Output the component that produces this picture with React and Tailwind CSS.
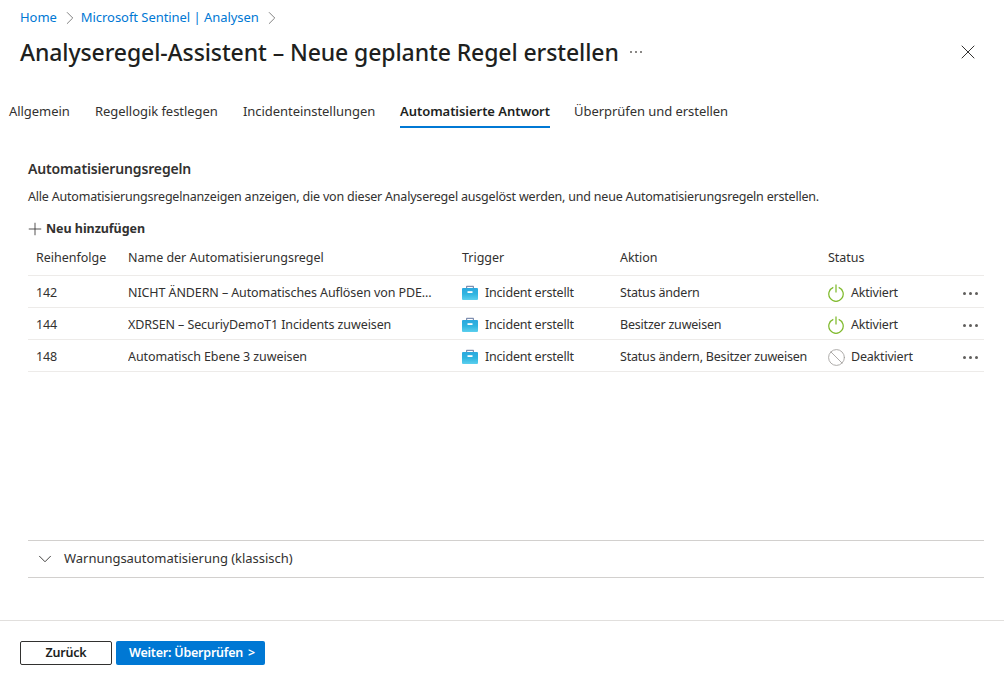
import React from 'react';
import { ChevronRight, ChevronDown, Plus, X, Ban } from 'lucide-react';

const rules = [
  { order: '142', name: 'NICHT ÄNDERN – Automatisches Auflösen von PDE...', action: 'Status ändern', active: true },
  { order: '144', name: 'XDRSEN – SecuriyDemoT1 Incidents zuweisen', action: 'Besitzer zuweisen', active: true },
  { order: '148', name: 'Automatisch Ebene 3 zuweisen', action: 'Status ändern, Besitzer zuweisen', active: false },
];

const tabs = [
  { label: 'Allgemein', cls: 'w-[86px] pl-[9px]' },
  { label: 'Regellogik festlegen', cls: 'w-[148px] pl-[9px]' },
  { label: 'Incidenteinstellungen', cls: 'w-[166px] pl-[9px]' },
];

const Briefcase = ({ id }) => (
  <svg width="16" height="16" viewBox="0 0 16 16" className="shrink-0">
    <defs>
      <linearGradient id={id} x1="0" y1="0" x2="0" y2="1">
        <stop offset="0" stopColor="#2aa8de" />
        <stop offset="0.5" stopColor="#2fb4e0" />
        <stop offset="1" stopColor="#5ccfee" />
      </linearGradient>
    </defs>
    <path d="M4 3.5V1.8C4 1.2 4.5.8 5 .8h6c.5 0 1 .4 1 1v1.7h-1.2V2H5.2v1.5z" fill="#7f8fb0" />
    <rect x="0" y="3" width="16" height="12" rx="1" fill={`url(#${id})`} />
    <rect x="5.5" y="6.2" width="5" height="1.8" fill="#ffffff" />
  </svg>
);

const PowerOn = () => (
  <svg width="16" height="18" viewBox="0 0 16 18" fill="none" stroke="#7fba2c" strokeWidth="1.25" className="shrink-0">
    <path d="M10.7 3.4A7.2 7.2 0 1 1 5.3 3.4" />
    <path d="M8 .6v8" />
  </svg>
);

const App = () => {
  return (
    <div className="w-[1004px] h-[686px] bg-white flex flex-col overflow-hidden font-['Noto_Sans',sans-serif] text-[#323130] text-[12.5px] tracking-[-0.2px]">
      <div className="flex items-center h-[18px] mt-[9px] pl-5 text-[#0078d4] text-[13px] tracking-[-0.05px]">
        <span>Home</span>
        <ChevronRight size={22} strokeWidth={1} className="text-[#777] ml-[2px]" />
        <span>Microsoft Sentinel | Analysen</span>
        <ChevronRight size={22} strokeWidth={1} className="text-[#777] ml-[2px]" />
      </div>

      <div className="flex items-center h-[30px] mt-[10px] pl-5 pr-[24px]">
        <h1 className="text-[23px] font-medium text-[#201f1e] tracking-[-0.1px]">Analyseregel-Assistent – Neue geplante Regel erstellen</h1>
        <span className="ml-[11px] flex gap-[3px]">
          <i className="w-[2px] h-[2px] bg-[#8a8886]" />
          <i className="w-[2px] h-[2px] bg-[#8a8886]" />
          <i className="w-[2px] h-[2px] bg-[#8a8886]" />
        </span>
        <X size={24} strokeWidth={1} className="ml-auto text-[#323130]" />
      </div>

      <div className="flex items-start h-[48px] mt-[26px] text-[13px] text-[#323130] tracking-[-0.05px]">
        {tabs.map((tab) => (
          <div key={tab.label} className={`${tab.cls} h-[35px] pt-[9px]`}>{tab.label}</div>
        ))}
        <div className="w-[150px] h-[35px] pt-[9px] font-semibold text-[#201f1e] border-b-2 border-[#0078d4] text-center whitespace-nowrap">Automatisierte Antwort</div>
        <div className="ml-[24px] pt-[9px]">Überprüfen und erstellen</div>
      </div>

      <div className="flex-1 flex flex-col pl-[28px] pr-[20px] mt-[18px]">
        <h2 className="text-[14px] leading-[20px] font-semibold text-[#323130] tracking-[-0.15px]">Automatisierungsregeln</h2>
        <p className="mt-[9px] leading-[18px]">Alle Automatisierungsregelnanzeigen anzeigen, die von dieser Analyseregel ausgelöst werden, und neue Automatisierungsregeln erstellen.</p>
        <div className="flex items-center mt-[14px] h-[18px] font-bold text-[#323130] tracking-[-0.05px]">
          <Plus size={20} strokeWidth={1} className="-ml-[3px] mr-[1px]" />
          <span>Neu hinzufügen</span>
        </div>

        <div className="grid grid-cols-[92px_334px_158px_208px_1fr] items-center h-[34px] pl-[8px] mt-[4px] border-b border-[#edebe9] tracking-[-0.02px]">
          <span>Reihenfolge</span>
          <span>Name der Automatisierungsregel</span>
          <span>Trigger</span>
          <span>Aktion</span>
          <span>Status</span>
        </div>
        {rules.map((rule) => (
          <div key={rule.order} className="grid grid-cols-[92px_334px_158px_208px_1fr] items-center h-[32px] pt-[3px] pl-[8px] border-b border-[#edebe9]">
            <span>{rule.order}</span>
            <span className="truncate tracking-[-0.1px]">{rule.name}</span>
            <span className="flex items-center gap-[7px]"><Briefcase id={`case-${rule.order}`} />Incident erstellt</span>
            <span className="whitespace-nowrap">{rule.action}</span>
            <span className="flex items-center">
              <span className="w-[16px] h-[16px] flex items-center justify-center">
                {rule.active
                  ? <PowerOn />
                  : <Ban size={19} strokeWidth={1.1} className="shrink-0 text-[#a19f9d]" />}
              </span>
              <span className="ml-[7px]">{rule.active ? 'Aktiviert' : 'Deaktiviert'}</span>
              <span className="ml-auto mr-[6px] flex gap-[3px]">
                <i className="w-[3px] h-[3px] rounded-full bg-[#605e5c]" />
                <i className="w-[3px] h-[3px] rounded-full bg-[#605e5c]" />
                <i className="w-[3px] h-[3px] rounded-full bg-[#605e5c]" />
              </span>
            </span>
          </div>
        ))}

        <div className="flex items-center h-[38px] mt-[168px] pl-[6px] border-y border-[#d2d0ce] text-[13px] tracking-[-0.03px]">
          <ChevronDown size={22} strokeWidth={1} className="mr-[8px]" />
          <span>Warnungsautomatisierung (klassisch)</span>
        </div>
      </div>

      <div className="flex items-center gap-[4px] h-[66px] pb-[2px] pl-5 border-t border-[#e1dfdd]">
        <button className="w-[92px] h-[24px] pt-[1px] rounded-[2px] border border-[#323130] font-semibold text-[#201f1e]">Zurück</button>
        <button className="flex items-center justify-between w-[149px] h-[24px] pt-[1px] pl-[13px] pr-[10px] rounded-[2px] bg-[#0078d4] text-white font-semibold tracking-[-0.22px]">
          <span>Weiter: Überprüfen</span>
          <span>&gt;</span>
        </button>
      </div>
    </div>
  );
};

export default App;
